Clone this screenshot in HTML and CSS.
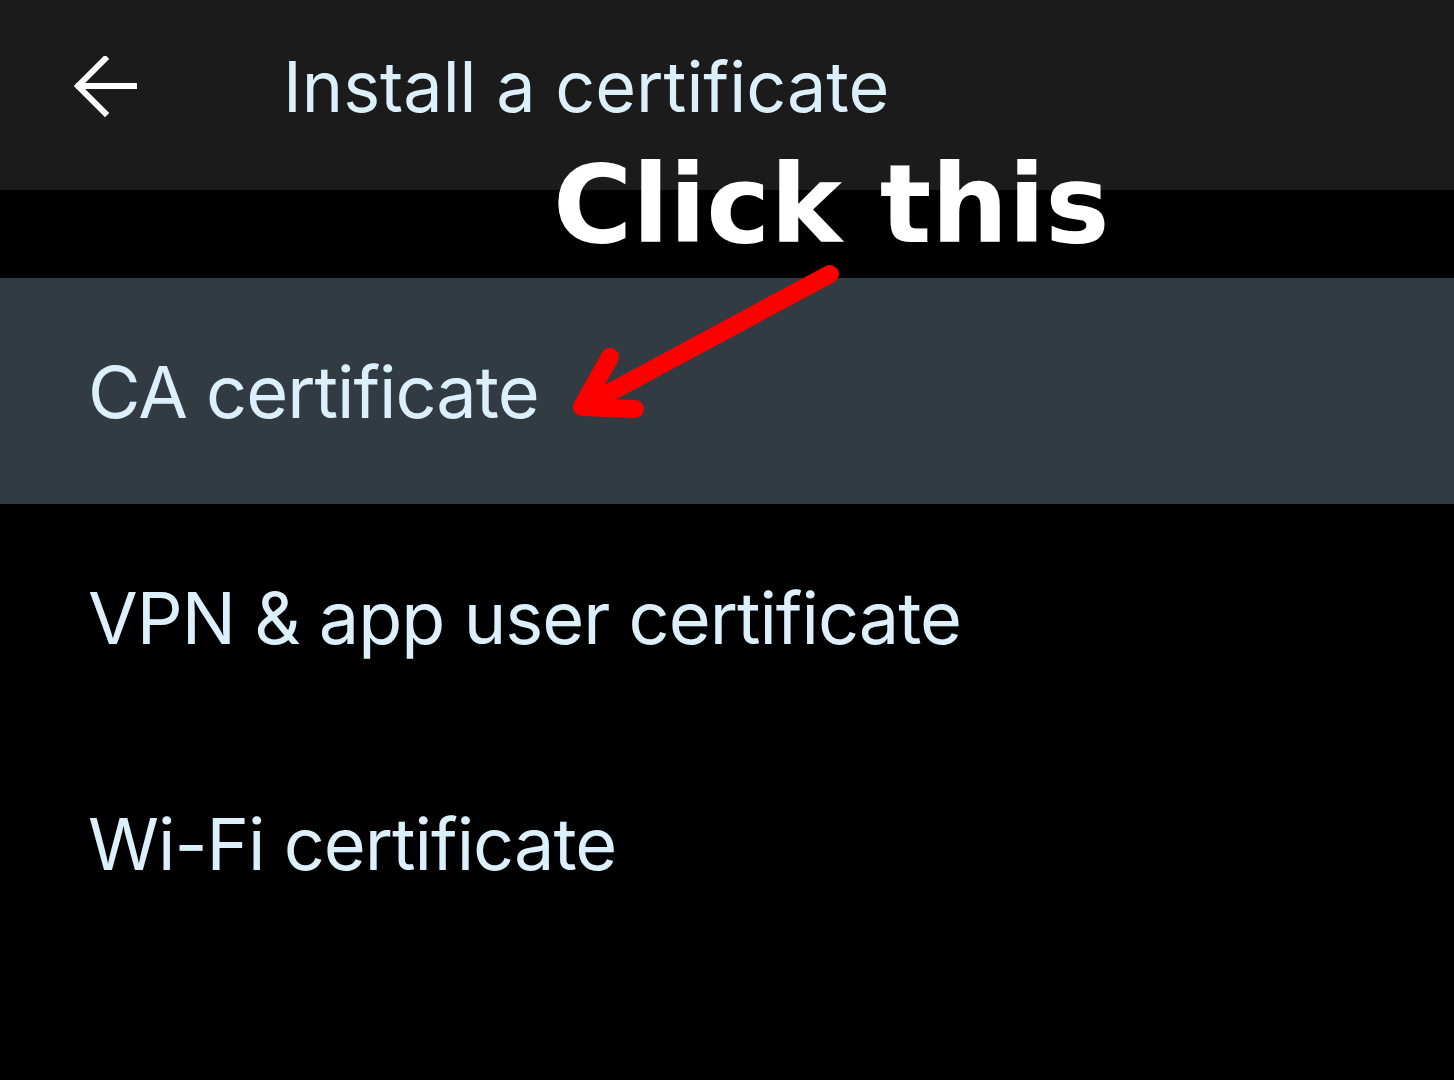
FILE: index.html
```html
<!DOCTYPE html>
<html>
<head>
<meta charset="utf-8">
<link rel="stylesheet" href="styles.css">
</head>
<body>
<div class="screen">
  <header class="topbar">
    <span class="back">
      <svg width="64" height="64" viewBox="0 0 64 64"><path d="M62 30H6M32 3L5 30L32 57" fill="none" stroke="#fff" stroke-width="6" stroke-linecap="square"/></svg>
    </span>
    <h1 class="title">Install a certificate</h1>
  </header>
  <div class="gap"></div>
  <ul class="list">
    <li class="item selected">CA certificate</li>
    <li class="item">VPN &amp; app user certificate</li>
    <li class="item">Wi-Fi certificate</li>
  </ul>
  <div class="callout">Click this</div>
  <svg class="arrow" width="300" height="180" viewBox="0 0 300 180"><g fill="none" stroke="#ff0000" stroke-width="18" stroke-linecap="round" stroke-linejoin="round"><path d="M268 12L30 140"/><path d="M48 95L20 145L73 147"/></g></svg>
</div>
</body>
</html>
```
FILE: styles.css
```css
html, body { margin: 0; padding: 0; background: #000; }
.screen { position: relative; width: 1454px; height: 1080px; background: #000; overflow: hidden; font-family: Inter, "Open Sans", sans-serif; }
.topbar { height: 190px; background: #1b1b1b; display: flex; align-items: center; }
.back { width: 64px; height: 64px; margin-left: 73px; margin-top: -14px; display: flex; }
.title { margin: 0 0 0 146px; margin-top: -18px; font-weight: 400; font-size: 70px; color: #dcf0fc; letter-spacing: 0; }
.gap { height: 88px; }
.list { list-style: none; margin: 0; padding: 0; }
.item { height: 226px; display: flex; align-items: center; padding-left: 88px; font-size: 72px; color: #dcf0fc; letter-spacing: -1px; }
.selected { background: #323b42; }
.callout { position: absolute; left: 553px; top: 142px; font-family: "DejaVu Sans", sans-serif; font-weight: 700; font-size: 108px; color: #fff; }
.arrow { position: absolute; left: 562px; top: 262px; }
```
